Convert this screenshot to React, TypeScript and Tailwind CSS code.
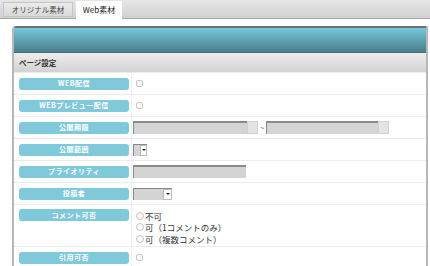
const jp = '"Noto Sans CJK JP", "Liberation Sans", sans-serif';

function Label({ text }: { text: string }) {
  return (
    <div className="w-[110px] h-[12px] rounded-[3px] bg-[#80c9da] flex items-center justify-center">
      <span className="text-[7px] leading-none font-bold text-white tracking-[0.5px]">{text}</span>
    </div>
  );
}

function Checkbox() {
  return <div className="w-[7px] h-[7px] rounded-[2px] border border-[#c8c8c8] bg-[#fafafa]" />;
}

function Radio({ text }: { text: string }) {
  return (
    <div className="flex items-center h-[11.5px]">
      <div className="w-[8px] h-[8px] rounded-full border border-[#c4c4c4] bg-[#fafafa] mr-[1px]" />
      <span className="text-[8.5px] leading-none text-[#333]">{text}</span>
    </div>
  );
}

function DateInput({ w }: { w: string }) {
  return (
    <div className={`${w} h-[13px] flex`}>
      <div className="flex-1 bg-[#d4d4d4] border-t-2 border-l border-[#8a8a8a]" />
      <div className="w-[11px] bg-[#e4e4e4] border border-[#d0d0d0]" />
    </div>
  );
}

function Row({ label, h = 'h-[22px]', top = false, children }: { label: string; h?: string; top?: boolean; children?: React.ReactNode }) {
  return (
    <div className={`flex ${h} border-t border-[#ececec]`}>
      <div className={`w-[118px] pl-[5px] flex ${top ? 'items-start pt-[4px]' : 'items-center'} border-r border-[#eeeeee]`}>
        <Label text={label} />
      </div>
      <div className={`flex-1 pl-[1px] flex ${top ? 'items-start' : 'items-center'}`}>{children}</div>
    </div>
  );
}

export default function App() {
  return (
    <div className="w-[430px] h-[266px] overflow-hidden bg-white" style={{ fontFamily: jp }}>
      {/* Tabs */}
      <div className="h-[19px] flex items-end pl-[3px] gap-[3px] bg-gradient-to-b from-[#e6e6e6] to-[#d0d0d0] border-b border-[#a8a8a8]">
        <div className="h-[15px] w-[70px] mb-[1px] bg-gradient-to-b from-[#ececec] to-[#d8d8d8] border border-[#c4c4c4] flex items-center justify-center">
          <span className="text-[7.5px] leading-none text-[#444]">オリジナル素材</span>
        </div>
        <div className="h-[18px] w-[46px] -mb-[1px] bg-white flex items-center justify-center">
          <span className="text-[8px] leading-none text-[#222]">Web素材</span>
        </div>
      </div>

      {/* Panel */}
      <div className="pl-[12px] pr-[2px] pt-[7px]">
        <div className="rounded-tl-[4px] border-l-2 border-r-2 border-[#b8b8b8] overflow-hidden">
          <div className="h-[27px] border-t-2 border-[#707070] bg-gradient-to-b from-[#74c8dc] to-[#4b7e8a] border-b border-b-[#456f79]" />
          <div className="h-[19px] bg-gradient-to-b from-[#eeeeee] to-[#d2d2d2] flex items-center pl-[5px]">
            <span className="text-[7.5px] leading-none font-bold text-[#333]">ページ設定</span>
          </div>
          <div className="bg-white">
            <Row label="WEB配信"><div className="pl-[3px]"><Checkbox /></div></Row>
            <Row label="WEBプレビュー配信"><div className="pl-[3px]"><Checkbox /></div></Row>
            <Row label="公開期限">
              <DateInput w="w-[125px]" />
              <span className="text-[8px] text-[#666] px-[2px] leading-none">~</span>
              <DateInput w="w-[123px]" />
            </Row>
            <Row label="公開範囲">
              <div className="w-[14px] h-[12px] flex border-t border-l border-[#888]">
                <div className="w-[6px] bg-[#d4d4d4]" />
                <div className="flex-1 bg-white border border-[#bbb] flex items-center justify-center">
                  <div className="w-0 h-0 border-l-[2px] border-r-[2px] border-t-[2px] border-l-transparent border-r-transparent border-t-[#222]" />
                </div>
              </div>
            </Row>
            <Row label="プライオリティ">
              <div className="w-[113px] h-[13px] bg-[#d4d4d4] border-t-2 border-l border-[#8a8a8a]" />
            </Row>
            <Row label="投稿者">
              <div className="w-[39px] h-[12px] flex border-t border-l border-[#888]">
                <div className="flex-1 bg-[#d4d4d4]" />
                <div className="w-[9px] bg-white border border-[#bbb] flex items-center justify-center">
                  <div className="w-0 h-0 border-l-[2px] border-r-[2px] border-t-[2px] border-l-transparent border-r-transparent border-t-[#222]" />
                </div>
              </div>
            </Row>
            <Row label="コメント可否" h="h-[42px]" top>
              <div className="pl-[3px] pt-[5px] flex flex-col">
                <Radio text="不可" />
                <Radio text="可（1コメントのみ）" />
                <Radio text="可（複数コメント）" />
              </div>
            </Row>
            <Row label="引用可否"><div className="pl-[3px]"><Checkbox /></div></Row>
          </div>
        </div>
      </div>
    </div>
  );
}
